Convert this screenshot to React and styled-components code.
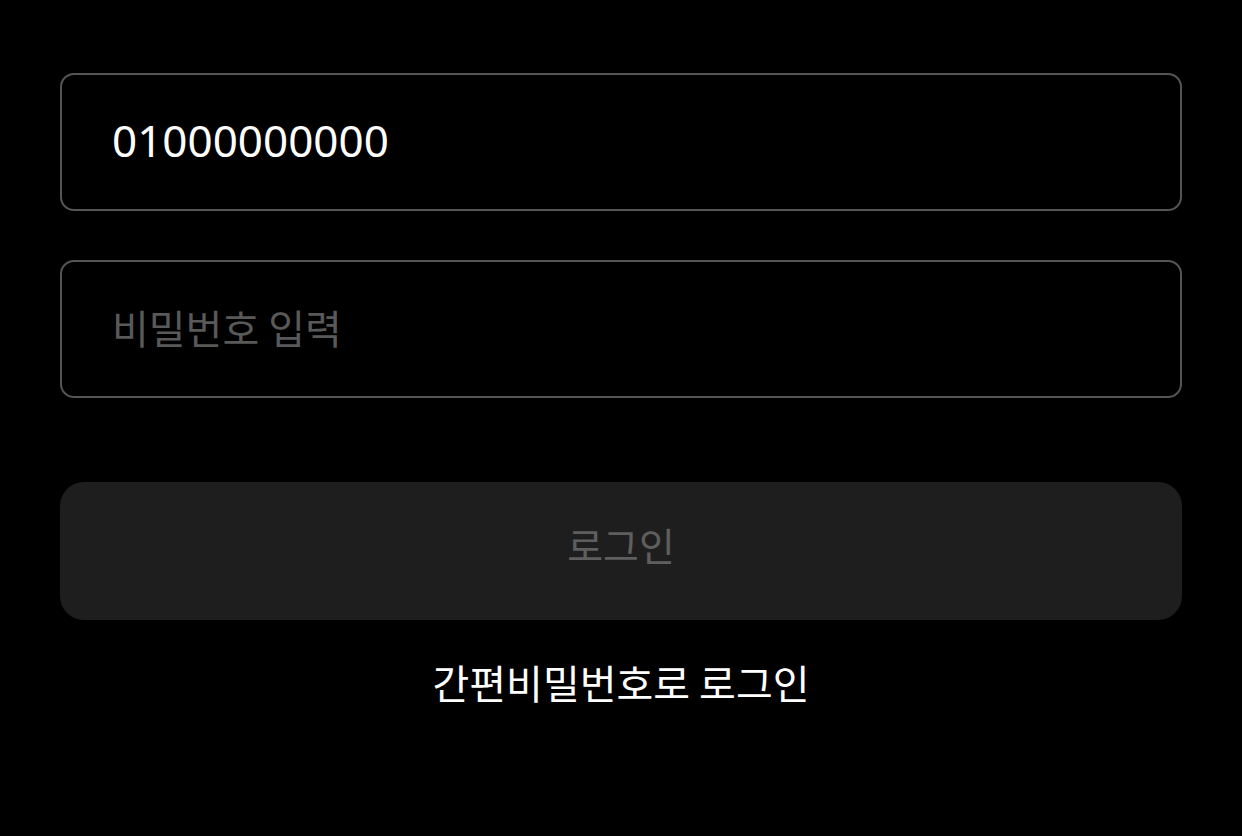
import React from 'react';
import styled, { createGlobalStyle } from 'styled-components';

const GlobalStyle = createGlobalStyle`
	html, body {
		margin: 0;
		padding: 0;
		background: #000;
	}
	body {
		font-family: "Noto Sans", "Noto Sans CJK KR", sans-serif;
	}
`;

const Page = styled.main`
	width: 1242px;
	height: 836px;
	box-sizing: border-box;
	padding: 73px 60px 0;
	background: #000;
	display: flex;
	flex-direction: column;
`;

const Form = styled.form`
	display: flex;
	flex-direction: column;
	gap: 49px;
`;

const Field = styled.input`
	box-sizing: border-box;
	width: 100%;
	height: 138px;
	padding: 0 50px 4px;
	background: #000;
	border: 2px solid #555;
	border-radius: 14px;
	color: #fff;
	font-family: "Noto Sans", "Noto Sans CJK KR", sans-serif;
	font-size: 44px;
	outline: none;

	&::placeholder {
		color: #595959;
		font-family: "Noto Sans CJK KR", sans-serif;
		font-size: 40px;
	}
`;

const SubmitButton = styled.button`
	margin-top: 84px;
	width: 100%;
	height: 138px;
	padding: 0 0 14px;
	border: none;
	border-radius: 24px;
	background: #1e1e1e;
	color: #5e5e5e;
	font-family: "Noto Sans CJK KR", sans-serif;
	font-size: 39px;
	cursor: default;
`;

const TextLink = styled.button`
	align-self: center;
	margin-top: 33px;
	border: none;
	background: none;
	padding: 0;
	color: #fff;
	font-family: "Noto Sans CJK KR", sans-serif;
	font-size: 40px;
`;

const App = () => (
	<>
		<GlobalStyle />
		<Page>
			<Form onSubmit={(e) => e.preventDefault()}>
				<Field type="tel" defaultValue="01000000000" />
				<Field type="password" placeholder="비밀번호 입력" />
			</Form>
			<SubmitButton type="button" disabled>
				로그인
			</SubmitButton>
			<TextLink type="button">간편비밀번호로 로그인</TextLink>
		</Page>
	</>
);

export default App;
